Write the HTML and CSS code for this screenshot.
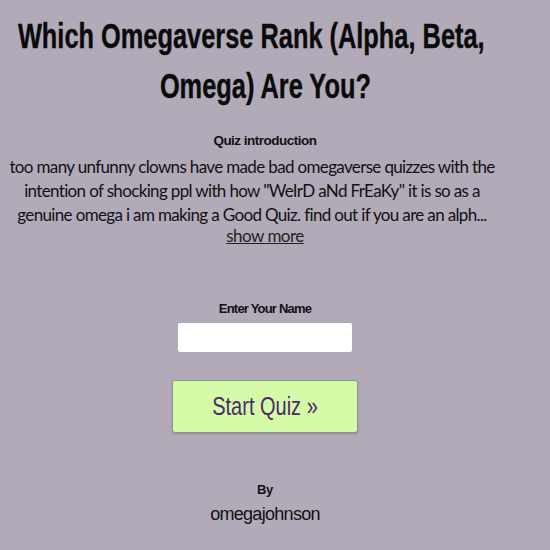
FILE: index.html
```html
<!DOCTYPE html>
<html>
<head>
<meta charset="utf-8">
<link rel="stylesheet" href="styles.css">
</head>
<body>
<main class="quiz">
  <h1 class="title"><span class="title-first">Which Omegaverse Rank (Alpha, Beta,</span><br>Omega) Are You?</h1>
  <h2 class="label intro-label">Quiz introduction</h2>
  <p class="intro-text">too many unfunny clowns have made bad omegaverse quizzes with the intention of shocking ppl with how "WeIrD aNd FrEaKy" it is so as a genuine omega i am making a Good Quiz. find out if you are an alph...</p>
  <div class="more-row"><a class="more" href="#">show more</a></div>
  <label class="label name-label" for="name">Enter Your Name</label>
  <input class="name" id="name" type="text">
  <button class="btn" type="button"><span class="btn-text">Start Quiz »</span></button>
  <div class="label by">By</div>
  <div class="author-name">omegajohnson</div>
</main>
</body>
</html>
```
FILE: styles.css
```css
html, body {
  margin: 0;
  padding: 0;
  background: #b2aab9;
  overflow-x: hidden;
}
body {
  color: #111;
  font-family: "Liberation Sans", Arial, sans-serif;
}
.quiz {
  width: 530px;
  display: flex;
  flex-direction: column;
  align-items: center;
  padding-top: 11px;
}

/* heading: a condensed bold face */
.title {
  margin: 0;
  white-space: nowrap;
  text-align: center;
  font-family: "Liberation Sans", Arial, sans-serif;
  font-weight: bold;
  font-size: 35px;
  line-height: 50px;
  color: #0a0a0a;
  transform: scaleX(0.725);
  -webkit-text-stroke: 0.4px #0a0a0a;
}
.title-first {
  padding-right: 39px;
}

.label {
  margin: 0;
  font-family: "Liberation Sans", Arial, sans-serif;
  font-weight: bold;
  color: #111;
}
.intro-label {
  margin-top: 22px;
  font-size: 13.5px;
  line-height: 16px;
  letter-spacing: -0.5px;
}
.intro-text {
  margin: 6px 0 0 5px;
  align-self: flex-start;
  width: 494px;
  text-align: center;
  font-family: "Lato", "Open Sans", sans-serif;
  font-size: 17px;
  line-height: 24px;
  letter-spacing: -0.65px;
  color: #111;
}
.more-row {
  margin-top: -2px;
  font-family: "Lato", sans-serif;
  font-size: 17px;
  line-height: 22px;
  letter-spacing: -0.5px;
}
.more {
  color: #222;
  text-decoration: underline;
}
.name-label {
  margin-top: 54px;
  font-size: 13px;
  line-height: 15px;
  letter-spacing: -0.8px;
}
.name {
  margin-top: 7px;
  width: 174px;
  height: 29px;
  box-sizing: border-box;
  border: none;
  border-radius: 2px;
  background: #fff;
}
.btn {
  margin-top: 28px;
  width: 186px;
  height: 53px;
  padding: 0;
  background: #d5fba8;
  border: 1px solid #8c9a84;
  border-radius: 3px;
  box-shadow: 0 1px 2px rgba(0, 0, 0, 0.2);
}
.btn-text {
  display: inline-block;
  color: #4b2a6d;
  font-family: "Liberation Sans", Arial, sans-serif;
  font-size: 25px;
  transform: scaleX(0.8);
}
.by {
  margin-top: 49px;
  font-size: 13px;
  line-height: 15px;
  letter-spacing: -0.4px;
}
.author-name {
  margin-top: 7px;
  font-size: 18px;
  line-height: 20px;
  letter-spacing: -0.7px;
  color: #111;
}
```
